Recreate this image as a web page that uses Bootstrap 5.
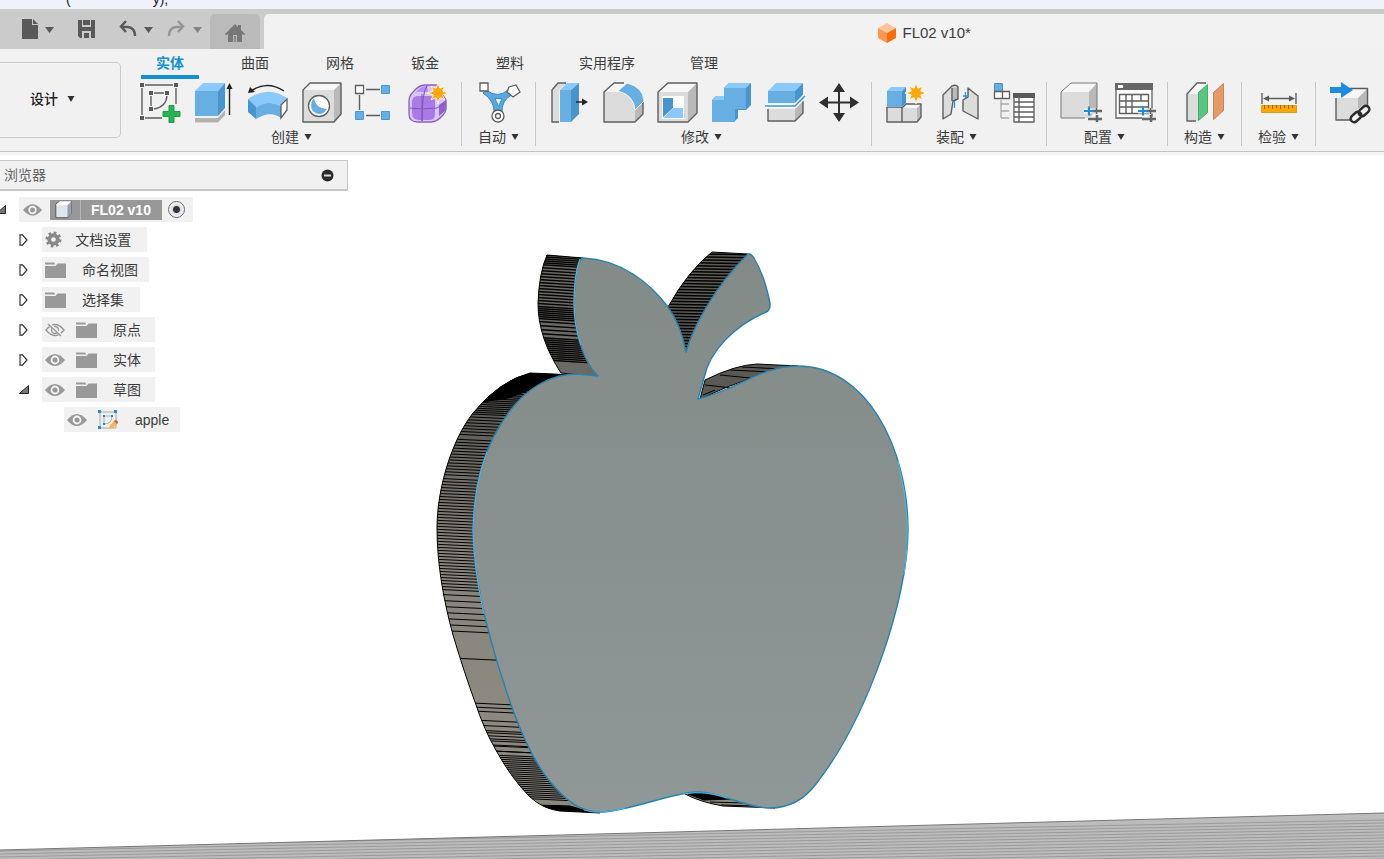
<!DOCTYPE html>
<html lang="zh-CN">
<head>
<meta charset="utf-8">
<meta name="viewport" content="width=device-width, initial-scale=1">
<title>FL02 v10</title>
<link href="https://cdn.jsdelivr.net/npm/bootstrap@5.3.0/dist/css/bootstrap.min.css" rel="stylesheet">
<style>
  body { font: 14px/20px "Liberation Sans", "Noto Sans CJK SC", sans-serif; color: #3c3c3c; background: #fff; }
  button { font: inherit; color: inherit; background: none; border: 0; padding: 0; }
  svg { display: block; }
  .caption-strip { height: 9px; background: #eef3fa; color: #222; padding-left: 66px; gap: 82px; line-height: 10px; }
  .caption-strip span { margin-top: -6px; }
  .doc-bar { height: 40px; background: #cbcbcb; }
  .quick-tools { padding: 0 6px 0 20px; gap: 12px; }
  .home-tab { width: 50px; margin-top: 5px; padding-top: 3px; background: #bababa; border-radius: 5px 5px 0 0; }
  .doc-tab { margin: 5px 0 0 4px; padding: 2px 0 0 44.4%; background: #f2f2f2; border-top-left-radius: 5px; font-size: 15px; gap: 6px; }
  .ribbon { background: #f1f1f1; border-bottom: 3px solid #f4f4f4; }
  .ribbon-inner { height: 103px; border-bottom: 1px solid #c4c4c4; }
  .workspace-btn { width: 121px; height: 76px; margin: 13px 5px 0 0; border: 1px solid #cacaca; border-left: 0; border-radius: 0 5px 5px 0; padding: 0 15px 2px 0; gap: 9px; flex: none; font-weight: 500; color: #222; }
  .mode-tabs { gap: 27px; padding: 4px 0 0 15px; height: 30px; }
  .mode-tabs a { color: inherit; text-decoration: none; padding: 0 15px; height: 26px; }
  .mode-tabs a.wide-label { padding: 0 13px; }
  .mode-tabs a.current { color: #1391d0; font-weight: 700; border-bottom: 4px solid #1391d0; }
  .tool-group { height: 64px; margin-top: 3px; padding: 0 9px 0 10px; border-right: 1px solid #c8c8c8; flex: none; }
  .tool-group.roomy { padding-right: 10px; }
  .tool-group.single { padding: 0 13px 0 14px; }
  .tool-group:last-child { border: 0; }
  .tool-icons { gap: 8px; }
  .tool-label { gap: 5px; height: 20px; padding: 0 5px 2px 0; }
  .single .tool-label { padding-right: 1px; }
  .tool-group > .tool-label { margin-top: 4px; }
  .stage { min-height: 0; }
  .model-view { position: absolute; inset: 0; width: 100%; height: 100%; }
  .browser-head { width: 348px; height: 31px; margin-top: 5px; border: 1px solid #c8c8c8; border-left: 0; border-bottom-width: 2px; background: #f1f1f1; color: #666; padding: 0 13px 0 4px; }
  .tree { margin: 6px 0 0; padding: 0; list-style: none; }
  .tree li { height: 25px; margin-bottom: 5px; }
  .twist { width: 42px; padding-left: 19px; flex: none; }
  .root .twist { width: 19px; padding: 0; }
  .leaf-row { padding-left: 64px; }
  .pill { background: #f1f1f1; height: 25px; padding: 0 11px 0 3px; }
  .pill .glyph + .glyph { margin-left: 11px; }
  .pill .caption { margin-left: 12px; background: none; }
  .pill .caption.deep { margin-left: 16px; }
  .pill.two-glyphs { padding-right: 14px; }
  .root .pill { padding: 0 8px 0 4px; }
  .root-name { background: #989898; color: #fff; font-weight: 700; height: 20px; width: 112px; margin: 0 6px 0 8px; }
  .root-name svg { width: 31px; border-right: 1px solid #b5b5b5; flex: none; }
  .root-name span { padding-left: 10px; }
  .radio-dot { appearance: none; width: 17px; height: 17px; margin: 0; border: 1px solid #666; border-radius: 50%; background: radial-gradient(circle, #333 3px, #d5dae6 4px, #fff 8px); }
  /* icon paints */
  .bf { fill: #67aee3; } .bt { fill: #8ac9fb; } .br { fill: #4794cf; }
  .gf { fill: #dcdcdc; } .gt { fill: #f6f6f6; } .gr { fill: #b9b9b9; }
  .ol { fill: none; stroke: #5e5e5e; stroke-width: 1.4; stroke-linejoin: round; }
  .dk { fill: #595959; } .wh { fill: #fff; stroke: #5e5e5e; stroke-width: 1.3; }
  .or { fill: #fca708; }
</style>
</head>
<body class="d-flex flex-column vh-100 overflow-hidden">
<svg width="0" height="0" class="position-absolute" aria-hidden="true">
  <defs>
    <symbol id="caret" viewBox="0 0 8 6"><path d="M.5 0h7L4 6z" fill="#333"/></symbol>
    <symbol id="star" viewBox="-11 -11 22 22"><path class="or" stroke="#fff" stroke-width=".8" d="M0-11 1.800-4.500 6.800-6.800 4.500-1.800 11 0 4.500 1.800 6.800 6.800 1.800 4.500 0 11-1.800 4.500-6.800 6.800-4.500 1.800-11 0-4.500-1.800-6.800-6.800-1.800-4.500z"/><circle class="or" r="5"/></symbol>
    <symbol id="eye" viewBox="0 0 20 14"><path d="M0 7Q10-5 20 7 10 19 0 7z" fill="#999"/><circle cx="10" cy="7" r="3.500" fill="none" stroke="#f4f4f4" stroke-width="1.800"/></symbol>
    <symbol id="eye-off" viewBox="0 0 20 14"><path d="M1 7Q10-4 19 7 10 18 1 7z" fill="none" stroke="#999" stroke-width="1.400"/><circle cx="10" cy="7" r="3.500" fill="none" stroke="#999" stroke-width="1.400"/><path d="M4 1l13 12" stroke="#f1f1f1" stroke-width="3"/><path d="M3 1l13 12" stroke="#999" stroke-width="1.400"/></symbol>
    <symbol id="folder" viewBox="0 0 21 16"><path d="M0 .5h9l1.500 2H0zM0 4h10.500l2-2.500H21V16H0z" fill="#999"/></symbol>
    <symbol id="closed" viewBox="0 0 9 12"><path d="M1 .8v10.400h2.500L8 6 3.500.8z" fill="#fff" stroke="#333" stroke-width="1.200"/></symbol>
    <symbol id="open" viewBox="0 0 10 9"><path d="M9.500.5v8H.5z" fill="#777" stroke="#222"/></symbol>
    <symbol id="sliders" viewBox="0 0 19 17"><path d="M0 6h18M4 14h14" stroke="#f1f1f1" stroke-width="5"/><path d="M8 6h10M4 14h14M13 10v7" stroke="#666" stroke-width="2.500"/><path d="M0 6h10M5 1.500v9" stroke="#1d8be0" stroke-width="2.200"/><path d="M12.500 3v6" stroke="#666" stroke-width="1.500"/></symbol>
  </defs>
</svg>

<div class="caption-strip d-flex overflow-hidden flex-shrink-0"><span>(</span><span>y),</span></div>

<header class="flex-shrink-0">
  <div class="doc-bar d-flex">
    <div class="quick-tools d-flex align-items-center">
      <button type="button" aria-label="文件"><svg width="40" height="26" viewBox="20 16 40 26"><path d="M22 19h10v6h6v14H22zM33 19l5 5h-5z" fill="#595959"/><path d="M45 27h9l-4.500 6z" fill="#595959"/></svg></button>
      <button type="button" aria-label="保存"><svg width="34" height="26" viewBox="72 16 34 26"><path fill-rule="evenodd" d="M78 20h17v18H80l-2-2zM82 20v7h9v-7h-1v5h-7v-5zM82 31v7h2v-5h5v5h2v-7z" fill="#595959"/><path d="M84 35h2v3h-2z" fill="#595959"/></svg></button>
      <button type="button" aria-label="撤消"><svg width="36" height="26" viewBox="118 16 36 26"><path d="M126 21l-5 5.500 5 5.500M122 27h6q7 1 7 9" fill="none" stroke="#595959" stroke-width="2.500"/><path d="M144 27h9l-4.500 6z" fill="#595959"/></svg></button>
      <button type="button" aria-label="恢复"><svg width="38" height="26" viewBox="166 16 38 26"><path d="M178 21l5 5.500-5 5.500M182 27h-6q-7 1-7 9" fill="none" stroke="#959595" stroke-width="2.500"/><path d="M193 27h9l-4.500 6z" fill="#858585"/></svg></button>
    </div>
    <button type="button" class="home-tab d-flex align-items-center justify-content-center" aria-label="主页"><svg width="20" height="20" viewBox="0 0 20 20"><path d="M10 1 0 11l1 1 2-1v8h5v-7h4v7h5v-8l2 1 1-1-4-4V2h-3v2z" fill="#777"/><path d="M9 13h2v6H9z" fill="#888"/></svg></button>
    <div class="doc-tab d-flex align-items-center flex-grow-1">
      <svg width="18" height="20" viewBox="0 0 18 20"><path d="M9 0l9 5-9 5-9-5z" fill="#ffc49b"/><path d="M0 5l9 5v10l-9-5z" fill="#ff9550"/><path d="M18 5l-9 5v10l9-5z" fill="#fb6d0c"/></svg>
      <span>FL02 v10*</span>
    </div>
  </div>

  <div class="ribbon"><div class="ribbon-inner d-flex">
    <button type="button" class="workspace-btn d-flex align-items-center justify-content-center">设计 <svg width="8" height="6"><use href="#caret"/></svg></button>
    <div class="flex-grow-1">
      <nav class="mode-tabs d-flex">
        <a href="#" class="current">实体</a><a href="#">曲面</a><a href="#">网格</a><a href="#">钣金</a><a href="#">塑料</a><a href="#" class="wide-label">实用程序</a><a href="#">管理</a>
      </nav>
      <div class="d-flex">
        <section class="tool-group">
          <div class="tool-icons d-flex">
            <button type="button" aria-label="创建草图"><svg width="46" height="42" viewBox="136 82 46 42"><path class="ol" d="M145 85h28M142 88v27M176 88v16M145 118h17M154 93h10M151 96v10M167 96q-1 11-13 13"/><path class="dk" d="M140 83h4v4h-4zM174 83h4v4h-4zM140 116h4v4h-4zM149 91h4v4h-4zM165 91h4v4h-4zM149 107h4v4h-4z"/><path d="M169 105.500h5v6h6v5h-6v6h-5v-6h-6v-5h6z" fill="#28b354" stroke="#1a9a43"/></svg></button>
            <button type="button" aria-label="拉伸"><svg width="46" height="42" viewBox="190 82 46 42"><path fill="#b3b3b3" d="M195 118h23l7-8v5l-7 7.500h-23z"/><path class="bf" d="M195 91h23v25h-23z"/><path class="bt" d="M195 91l8-8h22l-7 8z"/><path class="br" d="M218 91l7-8v25l-7 8z"/><path stroke="#222" stroke-width="1.400" d="M229.500 88v27"/><path fill="#222" d="M226.500 89l3-6 3 6z"/></svg></button>
            <button type="button" aria-label="旋转"><svg width="46" height="42" viewBox="244 82 46 42"><path class="bf" d="M256 107q11-8 25-1v12q-11-8-25 1z"/><path class="bt" d="M248 99q19-14 39-1l-7 8q-12-7-24 2z"/><path class="br" d="M248 99l8 8v12l-8-7z"/><path class="wh" d="M281 105l6-6v11l-6 8z"/><path fill="none" stroke="#222" stroke-width="1.400" d="M251 91q16-11 33 0"/><path fill="#222" d="M248 93l2-6 5 5z"/></svg></button>
            <button type="button" aria-label="孔"><svg width="46" height="42" viewBox="298 82 46 42"><path class="gf" d="M303 90h31v32h-31z"/><path class="gt" d="M303 90l7-7h31l-7 7z"/><path class="gr" d="M334 90l7-7v31l-7 8z"/><path class="ol" d="M303 90l7-7h31v31l-7 8h-31z"/><circle class="wh" cx="319" cy="106" r="10.500"/><path class="bf" d="M314 98q1 10 13 11-3 5-8 5-8-1-8-9 0-4 3-7z"/></svg></button>
            <button type="button" aria-label="阵列"><svg width="46" height="42" viewBox="352 82 46 42"><path class="ol" d="M366 89.500h14M359.500 95v15M366 115.500h14"/><path class="wh" d="M355.500 85.500h8v8h-8z"/><path class="bf" stroke="#4a9bd5" d="M381.500 85.500h8v8h-8zM355.500 111.500h8v8h-8zM381.500 111.500h8v8h-8z"/></svg></button>
            <button type="button" aria-label="创建形状"><svg width="46" height="42" viewBox="406 82 46 42"><path fill="#d9c4fb" stroke="#8862ba" stroke-width="1.300" d="M409 101q0-5 4-9 6-7 12-7h12l9 15v9q0 3-3 6-6 7-12 7h-13q-9 0-9-8z"/><path fill="#a97be6" d="M412 101q1-5 6-5h12q5 0 5 5v13q0 6-6 6h-10q-7 0-7-7z"/><path fill="#b98df3" d="M416 92q5-6 11-6l1 6z"/><path fill="#9264ca" d="M439 105l7-5q1 7-1 11l-6 5z"/><path fill="none" stroke="#8058ae" d="M410 108q12 2 27 0l8-5M422 94v27q0-29 5-35"/><use href="#star" x="427" y="82" width="22" height="22"/></svg></button>
          </div>
          <button type="button" class="tool-label d-flex align-items-center mx-auto">创建 <svg width="8" height="6"><use href="#caret"/></svg></button>
        </section>
        <section class="tool-group single">
          <button type="button" class="d-block" aria-label="自动"><svg width="46" height="42" viewBox="475 82 46 42"><path fill="#5ba7e0" stroke="#2f86c5" d="M485 90q12 9 22 0l5 4q-12 6-11 19h-8q1-12-11-20z"/><path fill="#eee" stroke="#3a8ecb" d="M494 98.500h7l-3.500 8z"/><path class="wh" d="M479 83h8v8h-8zM508 87l7-2 4 7-7 5-6-5z"/><circle class="wh" cx="497" cy="116" r="6"/><circle class="wh" cx="497" cy="116" r="2.500"/></svg></button>
          <button type="button" class="tool-label d-flex align-items-center mx-auto">自动 <svg width="8" height="6"><use href="#caret"/></svg></button>
        </section>
        <section class="tool-group">
          <div class="tool-icons d-flex">
            <button type="button" aria-label="按拉"><svg width="46" height="42" viewBox="546 82 46 42"><path class="gf" d="M552 90l6-7h8l-7 7v32h-7z"/><path class="ol" d="M566 83h-8l-6 7v32h7"/><path class="bf" d="M560 90h11v32h-11z"/><path class="bt" d="M560 90l7-7h12l-8 7z"/><path class="br" d="M571 90l8-7v31l-8 8z"/><path stroke="#222" stroke-width="1.500" d="M576 102h9"/><path fill="#222" d="M582 98.500l6 3.500-6 3.500z"/></svg></button>
            <button type="button" aria-label="圆角"><svg width="46" height="42" viewBox="600 82 46 42"><path class="gt" d="M604 92l10-9h12l-8 9z"/><path class="gf" d="M604 92h16q15 2 15 17v13h-31z"/><path class="gr" d="M635 110l8-8v12l-8 8z"/><path class="ol" d="M624 83h-10l-10 9v30h31l8-8v-12"/><path class="bf" stroke="#fff" stroke-width=".8" d="M618 91l9-8q16 4 17 18l-9 9q-1-15-17-19z"/></svg></button>
            <button type="button" aria-label="抽壳"><svg width="46" height="42" viewBox="654 82 46 42"><path class="gf" d="M658 92h30v30h-30z"/><path class="gt" d="M658 92l10-9h29l-9 9z"/><path class="gr" d="M688 92l9-9v30l-9 9z"/><path class="ol" d="M658 92l10-9h29v30l-9 9h-30z"/><path fill="#fff" d="M662 96h22v23h-22z"/><path class="br" d="M663 98h10v10l-10 9z"/><path class="bt" d="M663 118l10-10h10v10z"/></svg></button>
            <button type="button" aria-label="合并"><svg width="46" height="42" viewBox="708 82 46 42"><path class="br" d="M712 100l4-4h8v-8l5-5h22v22l-5 5h-8v8l-4 4h-22z"/><path class="bf" d="M712 100h12v-12h22v21h-11v13h-23z"/><path class="bt" d="M712 100l4-4h8v4zM724 88l5-5h22l-5 5z"/></svg></button>
            <button type="button" aria-label="分割"><svg width="46" height="42" viewBox="762 82 46 42"><path class="bf" d="M768 91h27v12h-27z"/><path class="bt" d="M768 91l8-8h27l-8 8z"/><path class="br" d="M795 91l8-8v12l-8 8z"/><path class="gf" d="M768 109h27v12h-27z"/><path class="gr" d="M795 109l8-8v12l-8 8z"/><path class="ol" d="M768 109v12h27l8-8v-12"/><path fill="none" stroke="#fff" stroke-width="4" d="M765 106h30l10-10"/><path fill="none" stroke="#3097dc" stroke-width="1.500" d="M765 106h30l10-10"/></svg></button>
            <button type="button" aria-label="移动"><svg width="46" height="42" viewBox="816 82 46 42"><path stroke="#303030" stroke-width="2" d="M826 102.500h26M839 90v25"/><path fill="#303030" d="M839 83l6 9h-12zM839 122l6-9h-12zM819 102.500l9-6v12zM859 102.500l-9-6v12z"/></svg></button>
          </div>
          <button type="button" class="tool-label d-flex align-items-center mx-auto">修改 <svg width="8" height="6"><use href="#caret"/></svg></button>
        </section>
        <section class="tool-group roomy">
          <div class="tool-icons d-flex">
            <button type="button" aria-label="新建零部件"><svg width="46" height="42" viewBox="882 82 46 42"><path class="gf" d="M887 107h30v15h-30z"/><path class="gt" d="M902 108l4-4h15l-4 4z"/><path class="gr" d="M917 108l4-4v13l-4 5z"/><path class="ol" d="M887 107v15h30l4-5v-13h-15l-4 4v14M887 107h15"/><path class="bf" d="M887 91h15v16h-15z"/><path class="bt" d="M887 91l4-4h15l-4 4z"/><path class="br" d="M902 91l4-4v16l-4 4z"/><use href="#star" x="905" y="82" width="22" height="22"/></svg></button>
            <button type="button" aria-label="联接"><svg width="46" height="42" viewBox="936 82 46 42"><path class="gf" d="M943 95l9-9q4-2 6 1v12l-5 2-2 13-8 5z"/><path class="gr" d="M952 88l6-1v12l-5 2zM963 99l5-2v15l-5-2z"/><path class="gf" d="M968 88l10 8v23l-15-8v-11l5-3z"/><path class="ol" d="M943 95l9-9q4-2 6 1v12l-5 2-2 13-8 5zM952 88v13M968 88l10 8v23l-15-8v-11l5-3z"/><path fill="none" stroke="#2f96dc" stroke-width="1.300" d="M954.500 101v7M965.500 92v6M963 96h5"/></svg></button>
            <button type="button" aria-label="物料清单"><svg width="46" height="42" viewBox="990 82 46 42"><path class="bf" stroke="#4a8fc0" d="M994.500 83.500h8v8h-8z"/><path class="wh" d="M994.500 91.500h8v7h-8zM1002.500 91.500h7v7h-7z"/><path fill="none" stroke="#aaa" stroke-width="1.300" d="M1001 100v18M1001 104h8M1001 111h8M1001 118h8"/><path class="wh" d="M1014 94h20v28h-20z"/><path class="dk" d="M1013 93h22v5h-22z"/><path class="ol" stroke-width=".8" d="M1014 102h20M1014 107h20M1014 112h20M1014 117h20M1019 98v24"/></svg></button>
          </div>
          <button type="button" class="tool-label d-flex align-items-center mx-auto">装配 <svg width="8" height="6"><use href="#caret"/></svg></button>
        </section>
        <section class="tool-group roomy">
          <div class="tool-icons d-flex">
            <button type="button" aria-label="配置"><svg width="46" height="42" viewBox="1057 82 46 42"><path class="gf" d="M1061 92h28v26h-28z"/><path class="gt" d="M1061 92l10-9h26l-8 9z"/><path class="gr" d="M1089 92l8-9v27l-8 8z"/><path fill="none" stroke="#777" d="M1097 108v-25h-26l-10 9v26h24"/><use href="#sliders" x="1084" y="105" width="19" height="17"/></svg></button>
            <button type="button" aria-label="配置表"><svg width="46" height="42" viewBox="1111 82 46 42"><path class="wh" d="M1116 84h36v34h-36z"/><path fill="#666" d="M1115 83h38v7h-38z"/><path fill="#fff" d="M1118 85h5v3h-5z"/><path class="ol" d="M1119.500 94.500h29v19h-29zM1119.500 101h29M1119.500 107h29M1126 94v19M1132 94v19M1141 94v7"/><use href="#sliders" x="1138" y="105" width="19" height="17"/></svg></button>
          </div>
          <button type="button" class="tool-label d-flex align-items-center mx-auto">配置 <svg width="8" height="6"><use href="#caret"/></svg></button>
        </section>
        <section class="tool-group single">
          <button type="button" class="d-block" aria-label="构造"><svg width="46" height="42" viewBox="1182 82 46 42"><path class="gf" d="M1187 94l10-11h11l-10 10v28h-11z"/><path class="gt" d="M1187 94l10-11h11l-10 11z"/><path class="ol" d="M1206 83h-9l-10 11v27h9"/><path fill="#58c680" stroke="#45ac6b" d="M1198.500 92.500l9-8v28l-9 8z"/><path fill="#e59a68" stroke="#c98454" d="M1213.500 92.500l10-9v27l-10 9z"/></svg></button>
          <button type="button" class="tool-label d-flex align-items-center mx-auto">构造 <svg width="8" height="6"><use href="#caret"/></svg></button>
        </section>
        <section class="tool-group single">
          <button type="button" class="d-block" aria-label="检验"><svg width="46" height="42" viewBox="1256 82 46 42"><path class="ol" d="M1262 93v11M1296 93v11M1266 98.500h26"/><path class="dk" d="M1263 98.500l6-3v6zM1295 98.500l-6-3v6z"/><path class="or" stroke="#e39a1d" d="M1261.500 105.500h35v7h-35z"/><path stroke="#9b6a10" d="M1264.500 105v4M1268.500 105v3M1272.500 105v4M1276.500 105v3M1280.500 105v4M1284.500 105v3M1288.500 105v4M1292.500 105v3"/></svg></button>
          <button type="button" class="tool-label d-flex align-items-center mx-auto">检验 <svg width="8" height="6"><use href="#caret"/></svg></button>
        </section>
        <section class="tool-group single">
          <button type="button" class="d-block" aria-label="插入"><svg width="46" height="42" viewBox="1330 82 46 42"><path class="gf" d="M1336 98h22v22h-22z"/><path class="gt" d="M1336 98l10-9h21l-9 9z"/><path class="gr" d="M1358 98l9-9v22l-9 9z"/><path class="ol" d="M1350 88.500h17.500v19M1336 98v22h15"/><path fill="#1d8be0" d="M1330 87h11v-5l12 8-12 8v-5h-11z"/><path fill="none" stroke="#f1f1f1" stroke-width="10" d="M1352 121l15-13"/><g fill="none" stroke="#2d2d2d" stroke-width="2.500"><rect x="-6" y="-3.500" width="12" height="7" rx="3.500" transform="translate(1356 117) rotate(-42)"/><rect x="-6" y="-3.500" width="12" height="7" rx="3.500" transform="translate(1364 111) rotate(-42)"/></g></svg></button>
        </section>
      </div>
    </div>
  </div></div>
</header>

<main class="stage position-relative flex-grow-1">
  <svg class="model-view" viewBox="0 155 1384 704" preserveAspectRatio="xMidYMid slice" role="img" aria-label="apple">
    <defs>
      <linearGradient id="face" x2="0" y2="1"><stop stop-color="#838b88"/><stop offset=".5" stop-color="#899190"/><stop offset="1" stop-color="#8f9896"/></linearGradient>
      <linearGradient id="rim" x2="0" y2="1"><stop stop-color="#4f4e49"/><stop offset=".4" stop-color="#85837a"/><stop offset=".75" stop-color="#8b8980"/><stop offset="1" stop-color="#8a887e"/></linearGradient>
      <clipPath id="bodyClip"><path id="bodyShape" d="M600 376L530 373Q499 381 473 413C451 441 437 490 437 528C437 565 444 602 453 635Q465 675 475 702Q484 730 497 752Q512 779 530 797Q543 809 560 811L600 813z"/></clipPath>
      <clipPath id="leafClip"><path id="leafShape" d="M547 255L583 258 599 377 561 373C546 350 538 327 538 303Q539 273 547 255z"/></clipPath>
      <clipPath id="stemClip"><path id="stemShape" d="M712 252L748 254Q718 285 700 318L686 353 668 307Q688 271 712 252z"/></clipPath>
      <clipPath id="groundClip"><path id="groundShape" d="M0 850L1384 813V860H0z"/></clipPath>
    </defs>
    <use href="#groundShape" fill="#bcbcbc"/>
    <g clip-path="url(#groundClip)"><path id="groundLines" stroke="#9a9a9a" fill="none"/></g>
    <path d="M0 850L1384 813" stroke="#777"/>
    <g stroke="#000">
      <use href="#bodyShape" fill="url(#rim)"/><g clip-path="url(#bodyClip)"><path id="bodyLines"/><path d="M530 368L570 377 540 386 508 398 482 402 490 380zM536 805L570 806 600 815H540z"/></g>
      <use href="#leafShape" fill="#6b6962"/><g clip-path="url(#leafClip)"><path id="leafLines" stroke-width="1.300"/></g>
      <use href="#stemShape" fill="#5d5c54"/><g clip-path="url(#stemClip)"><path id="stemLines" stroke-width="1.500"/></g>
      <path d="M705 380Q735 365 757 364L798 366Q755 373 700 399z" fill="#5a5953"/>
      <path d="M703 395L715 390M705 385L732 388M720 375L750 378M730 370L770 372M742 367L782 369" fill="none"/>
      <path d="M685 794Q700 802 723 806L775 808Q735 790 700 791z" fill="#8d8a80"/>
      <path d="M688 794L712 792 733 799 704 800zM710 802L744 803M721 805L755 806"/>
    </g>
    <path fill="url(#face)" stroke="#2583ad" stroke-width="1.400" stroke-linejoin="round" d="M583 258C622 260 650 283 668 307C678 321 683 336 686 352C692 330 713 288 747 255Q750 252 754 258C763 273 767 288 770 303Q771 311 764 313C735 326 710 350 704 378L698 399C740 389 760 366 798 366C866 366 908 447 908 530C908 600 867 719 816 784Q798 808 770 808C745 808 721 792 698 792C672 792 628 812 600 812C580 812 567 801 552 784C532 761 517 723 507 693C491 645 473 580 473 530C474 476 487 442 509 412C528 386 553 374 577 374L598 376C581 360 574 326 574 303Q575 259 583 258z"/>
    <path fill="none" stroke="#56b5e5" d="M580 259Q574 275 574 303 574 325 581 345M487 452Q474 485 473 530 474 570 484 614M898 461Q913 522 904 575M584 810Q600 815 625 808M683 794Q705 790 727 798"/>
  </svg>

  <aside class="position-relative">
    <div class="browser-head d-flex align-items-center justify-content-between"><span>浏览器</span>
      <button type="button" aria-label="收起"><svg width="13" height="13"><circle cx="6.500" cy="6.500" r="6" fill="#2b2b2b"/><path d="M3 5.500h7v2H3z" fill="#ddd"/></svg></button></div>
    <ul class="tree">
      <li class="root d-flex align-items-center"><button type="button" class="twist" aria-label="折叠"><svg width="6" height="9" viewBox="4 0 6 9"><use href="#open" width="10" height="9"/></svg></button>
        <div class="pill d-flex align-items-center"><svg width="19" height="14"><use href="#eye"/></svg>
          <div class="root-name d-flex align-items-center"><svg height="20" viewBox="0 0 31 20"><path d="M6 4l4-3h12v13l-4 4H6z" fill="#dfe4ed" stroke="#555"/><path d="M18 5l4-4v13l-4 4z" fill="#99a0ad"/><path d="M6 5l4-4h12l-4 4z" fill="#fff"/></svg><span>FL02 v10</span></div>
          <input class="radio-dot" type="radio" name="active" checked aria-label="激活 FL02 v10"></div></li>
      <li class="d-flex align-items-center"><button type="button" class="twist" aria-label="展开"><svg width="9" height="12"><use href="#closed"/></svg></button>
        <div class="pill d-flex align-items-center pe-3"><svg class="glyph" width="17" height="17" viewBox="-9 -9 18 18"><circle r="4.500" fill="none" stroke="#888" stroke-width="4"/><circle r="7" fill="none" stroke="#888" stroke-width="3" stroke-dasharray="2.700 2.800"/></svg><span class="caption ps-1 ms-2">&#8202;文档设置</span></div></li>
      <li class="d-flex align-items-center"><button type="button" class="twist" aria-label="展开"><svg width="9" height="12"><use href="#closed"/></svg></button>
        <div class="pill d-flex align-items-center"><svg class="glyph" width="21" height="16"><use href="#folder"/></svg><span class="caption deep">命名视图</span></div></li>
      <li class="d-flex align-items-center"><button type="button" class="twist" aria-label="展开"><svg width="9" height="12"><use href="#closed"/></svg></button>
        <div class="pill d-flex align-items-center pe-3"><svg class="glyph" width="21" height="16"><use href="#folder"/></svg><span class="caption deep">选择集</span></div></li>
      <li class="d-flex align-items-center"><button type="button" class="twist" aria-label="展开"><svg width="9" height="12"><use href="#closed"/></svg></button>
        <div class="pill two-glyphs d-flex align-items-center"><svg class="glyph" width="20" height="14"><use href="#eye-off"/></svg><svg class="glyph" width="21" height="16"><use href="#folder"/></svg><span class="caption deep">原点</span></div></li>
      <li class="d-flex align-items-center"><button type="button" class="twist" aria-label="展开"><svg width="9" height="12"><use href="#closed"/></svg></button>
        <div class="pill two-glyphs d-flex align-items-center"><svg class="glyph" width="20" height="14"><use href="#eye"/></svg><svg class="glyph" width="21" height="16"><use href="#folder"/></svg><span class="caption deep">实体</span></div></li>
      <li class="d-flex align-items-center"><button type="button" class="twist" aria-label="折叠"><svg width="10" height="9"><use href="#open"/></svg></button>
        <div class="pill two-glyphs d-flex align-items-center"><svg class="glyph" width="20" height="14"><use href="#eye"/></svg><svg class="glyph" width="21" height="16"><use href="#folder"/></svg><span class="caption deep">草图</span></div></li>
      <li class="leaf-row d-flex align-items-center">
        <div class="pill d-flex align-items-center"><svg class="glyph" width="20" height="14"><use href="#eye"/></svg><svg class="glyph" width="21" height="20" viewBox="0 0 21 20"><path d="M2 2h16v16H2zM6 6h8q0 8-8 8z" fill="none" stroke="#aaa"/><path d="M0 0h3v3H0zM16 0h3v3h-3zM0 16h3v3H0zM5 5h2v2H5zM13 5h2v2h-2zM5 13h2v2H5z" fill="#278cd5"/><path d="M11 19l1-4 5-5 3 3-5 5z" fill="#f6b84b"/><path d="M16 11l2-1 2 2-1 2z" fill="#e2433b"/></svg><span class="caption deep">apple</span></div></li>
    </ul>
  </aside>
</main>

<script>
  // Each band is [first y, last y, spacing]; ridges run across the rim with a slight downward slope.
  function ridges(id, x0, x1, drop, bands) {
    let d = '';
    for (const [from, to, step] of bands)
      for (let y = from; y <= to; y += step) d += `M${x0} ${y}L${x1} ${y + drop}`;
    document.getElementById(id).setAttribute('d', d);
  }
  ridges('bodyLines', 430, 620, 9, [[372, 412, 2], [415, 433, 3], [438, 438, 1], [441, 475, 3], [478, 590, 3], [594, 635, 6], [657, 657, 1], [701, 712, 4], [718, 750, 5], [730, 748, 6], [752, 794, 2]]);
  ridges('leafLines', 530, 610, 5, [[252, 262, 2], [264, 304, 3], [306, 318, 2], [321, 335, 4], [337, 360, 2]]);
  ridges('stemLines', 660, 760, 2, [[250, 350, 3]]);
  ridges('groundLines', 0, 1384, -28, [[848, 892, 3]]);
</script>
<script src="https://cdn.jsdelivr.net/npm/bootstrap@5.3.0/dist/js/bootstrap.bundle.min.js"></script>
</body>
</html>
